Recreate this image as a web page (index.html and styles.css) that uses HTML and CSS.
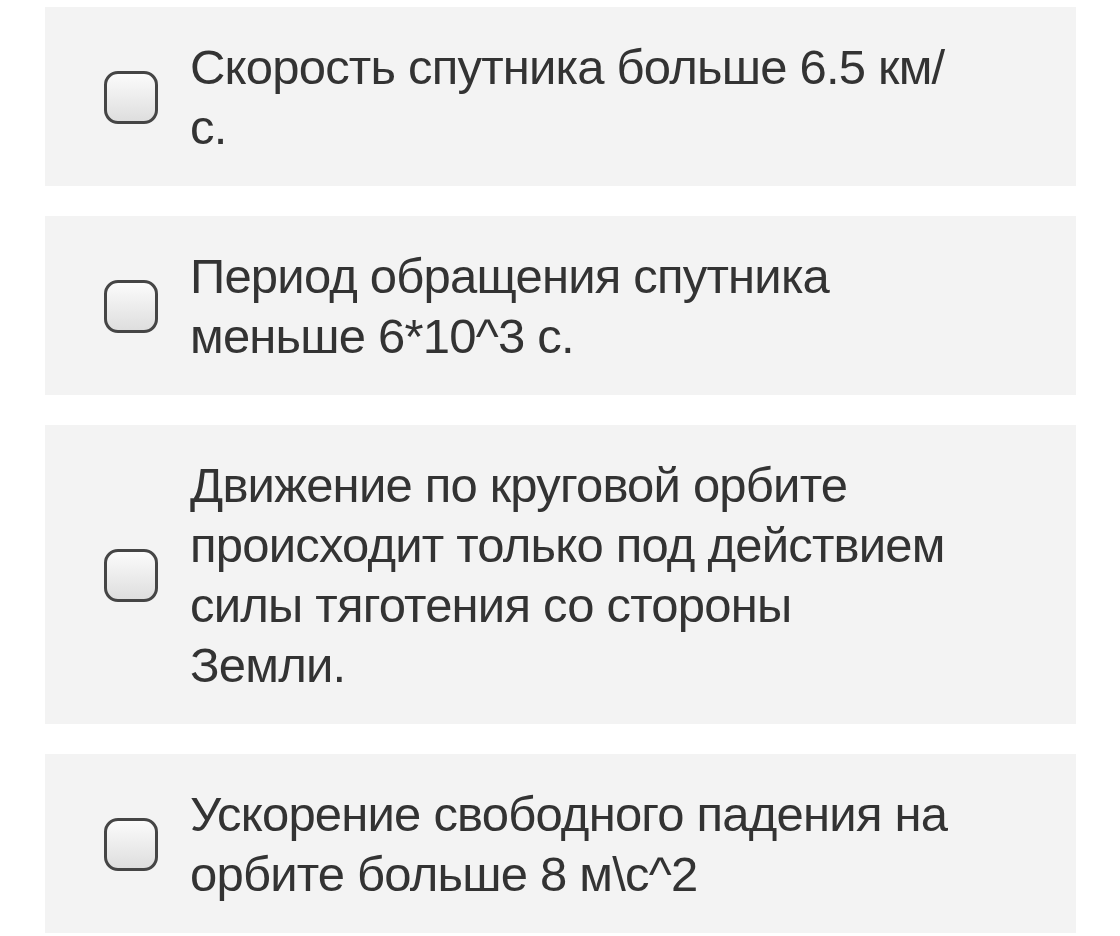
FILE: index.html
```html
<!DOCTYPE html>
<html lang="ru">
<head>
<meta charset="utf-8">
<link rel="stylesheet" href="styles.css">
</head>
<body>
<div class="list">
  <label class="option">
    <span class="box"></span>
    <span class="text">Скорость спутника больше 6.5 км/<wbr>с.</span>
  </label>
  <label class="option">
    <span class="box"></span>
    <span class="text">Период обращения спутника меньше 6*10^3 с.</span>
  </label>
  <label class="option">
    <span class="box"></span>
    <span class="text">Движение по круговой орбите происходит только под действием силы тяготения со стороны Земли.</span>
  </label>
  <label class="option">
    <span class="box"></span>
    <span class="text">Ускорение свободного падения на орбите больше 8 м\с^2</span>
  </label>
</div>
</body>
</html>
```

FILE: styles.css
```css
html, body {
  margin: 0;
  padding: 0;
  background: #ffffff;
}
.list {
  display: flex;
  flex-direction: column;
  gap: 30px;
  padding: 7px 44px 0 45px;
}
.option {
  display: flex;
  align-items: center;
  background: #f3f3f3;
  padding: 30px 121px 29px 59px;
  min-height: 120px;
}
.box {
  flex: 0 0 auto;
  width: 48px;
  height: 47px;
  border: 3px solid #454545;
  border-radius: 14px;
  background: linear-gradient(to bottom, #fbfbfb 0%, #dedede 100%);
  margin-right: 32px;
}
.text {
  font-family: "Liberation Sans", Arial, sans-serif;
  font-size: 49px;
  letter-spacing: -0.8px;
  line-height: 60px;
  color: #333333;
}
```
